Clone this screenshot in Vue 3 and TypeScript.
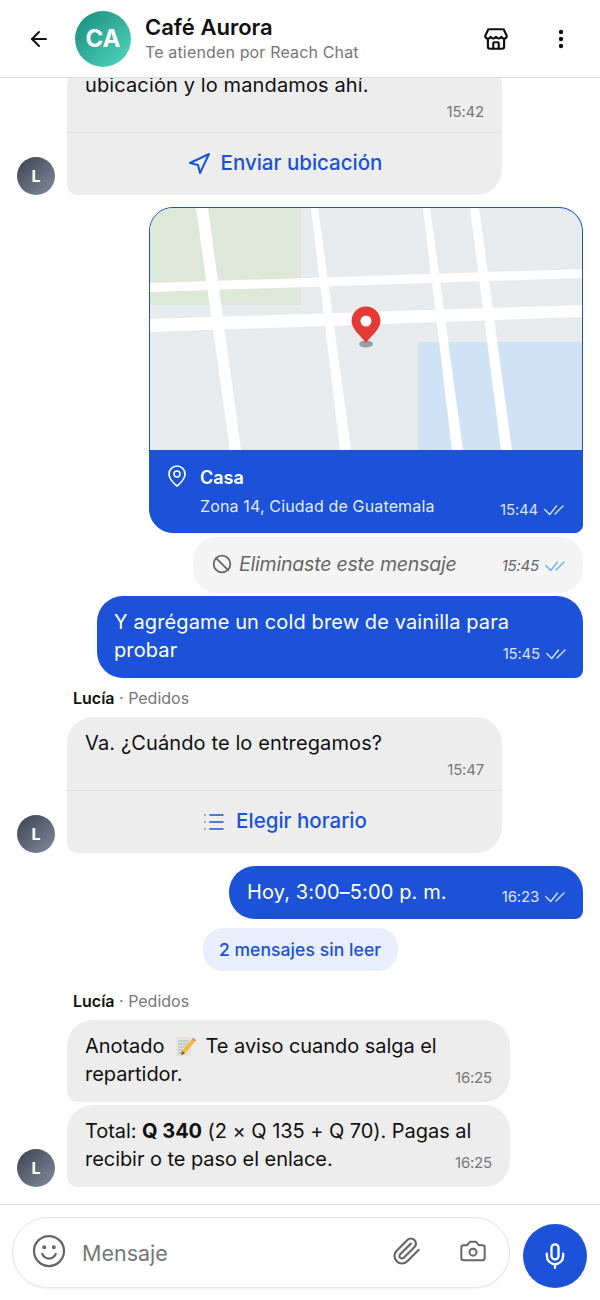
<template>
  <div class="screen">
    <header class="topbar">
      <button class="icon-btn back" aria-label="Volver">
        <svg width="24" height="24" viewBox="0 0 24 24" fill="none" stroke="#111" stroke-width="2" stroke-linecap="round" stroke-linejoin="round"><path d="M19 12H5" /><path d="m12 19-7-7 7-7" /></svg>
      </button>
      <div class="shop-avatar">CA</div>
      <div class="shop-info">
        <div class="shop-name">Café Aurora</div>
        <div class="shop-sub">Te atienden por Reach Chat</div>
      </div>
      <button class="icon-btn store" aria-label="Tienda">
        <svg width="26" height="26" viewBox="0 0 24 24" fill="none" stroke="#111" stroke-width="2" stroke-linecap="round" stroke-linejoin="round">
          <path d="M5 3h14l3 6.2a2.6 2.6 0 0 1-5 .8 2.8 2.8 0 0 1-5 0 2.8 2.8 0 0 1-5 0 2.6 2.6 0 0 1-5-.8z" />
          <path d="M4.5 12v7a2 2 0 0 0 2 2h11a2 2 0 0 0 2-2v-7" />
          <path d="M9.5 21v-5a1 1 0 0 1 1-1h3a1 1 0 0 1 1 1v5" />
        </svg>
      </button>
      <button class="icon-btn dots" aria-label="Más">
        <svg width="24" height="24" viewBox="0 0 24 24" fill="#111"><circle cx="12" cy="5" r="2.2" /><circle cx="12" cy="12" r="2.2" /><circle cx="12" cy="19" r="2.2" /></svg>
      </button>
    </header>

    <main class="messages">
      <div class="row in">
        <div class="avatar">L</div>
        <div class="bubble incoming card">
          <p class="text">ubicación y lo mandamos ahí.</p>
          <div class="card-time">15:42</div>
          <div class="action">
            <svg width="24" height="24" viewBox="0 0 24 24" fill="none" stroke="currentColor" stroke-width="2" stroke-linecap="round" stroke-linejoin="round"><polygon points="3 11 22 2 13 21 11 13 3 11" /></svg>
            <span>Enviar ubicación</span>
          </div>
        </div>
      </div>

      <div class="row out map-row">
        <div class="map-bubble">
          <svg class="map" width="432" height="242" viewBox="150 208 432 242">
            <rect x="150" y="208" width="432" height="242" fill="#e8ebee" />
            <rect x="150" y="208" width="151" height="97" fill="#dde8d9" />
            <rect x="418" y="342" width="164" height="108" fill="#d0e2f6" />
            <g fill="#fff">
              <polygon points="150,283 582,269 582,278 150,292" />
              <polygon points="150,319 582,305 582,317 150,332" />
              <polygon points="196,208 208,208 241,450 230,450" />
              <polygon points="311,208 318,208 351,450 340,450" />
              <polygon points="423,208 430,208 463,450 452,450" />
              <polygon points="470,208 479,208 512,450 501,450" />
            </g>
            <ellipse cx="366" cy="344" rx="7" ry="3.5" fill="#9a9da1" />
            <path d="M366 343c-5-7-14.500-14-14.500-22a14.500 14.500 0 0 1 29 0c0 8-9.500 15-14.500 22z" fill="#e53935" />
            <circle cx="366" cy="321" r="5.500" fill="#fff" />
          </svg>
          <div class="map-info">
            <svg class="map-pin" width="24" height="24" viewBox="0 0 24 24" fill="none" stroke="currentColor" stroke-width="1.600" stroke-linecap="round" stroke-linejoin="round"><path d="M20 10c0 6-8 12-8 12s-8-6-8-12a8 8 0 0 1 16 0Z" /><circle cx="12" cy="10" r="3" /></svg>
            <div class="map-text">
              <div class="map-title">Casa</div>
              <div class="map-foot">
                <span class="map-addr">Zona 14, Ciudad de Guatemala</span>
                <span class="meta light">15:44 <svg class="ticks" width="20" height="12" viewBox="0 0 20 12" fill="none" stroke="currentColor" stroke-width="1.300" stroke-linecap="round" stroke-linejoin="round"><path d="M.7 5.500 5.700 10.500 12.500 2" /><path d="M11 10 19 2" /></svg></span>
              </div>
            </div>
          </div>
        </div>
      </div>

      <div class="row out after-map">
        <div class="bubble deleted">
          <svg class="ban" width="20" height="20" viewBox="0 0 24 24" fill="none" stroke="#666" stroke-width="2.200" stroke-linecap="round"><circle cx="12" cy="12" r="10" /><path d="m4.900 4.900 14.200 14.200" /></svg>
          <em class="deleted-text">Eliminaste este mensaje</em>
          <span class="meta seen">15:45 <svg class="ticks" width="20" height="12" viewBox="0 0 20 12" fill="none" stroke="currentColor" stroke-width="1.300" stroke-linecap="round" stroke-linejoin="round"><path d="M.7 5.500 5.700 10.500 12.500 2" /><path d="M11 10 19 2" /></svg></span>
        </div>
      </div>

      <div class="row out tight">
        <div class="bubble outgoing wide">
          <p class="text">Y agrégame un cold brew de vainilla para<br />probar<span class="meta light float">15:45 <svg class="ticks" width="20" height="12" viewBox="0 0 20 12" fill="none" stroke="currentColor" stroke-width="1.300" stroke-linecap="round" stroke-linejoin="round"><path d="M.7 5.500 5.700 10.500 12.500 2" /><path d="M11 10 19 2" /></svg></span></p>
        </div>
      </div>

      <div class="sender"><b>Lucía</b> · Pedidos</div>
      <div class="row in">
        <div class="avatar">L</div>
        <div class="bubble incoming card">
          <p class="text">Va. ¿Cuándo te lo entregamos?</p>
          <div class="card-time">15:47</div>
          <div class="action">
            <svg width="24" height="24" viewBox="0 0 24 24" fill="none" stroke="currentColor" stroke-width="1.600" stroke-linecap="round"><path d="M8 5h13M8 12h13M8 19h13M3 5h.01M3 12h.01M3 19h.01" /></svg>
            <span>Elegir horario</span>
          </div>
        </div>
      </div>

      <div class="row out after-card">
        <div class="bubble outgoing hoy">
          <p class="text">Hoy, 3:00–5:00 p. m.</p>
          <span class="meta light">16:23 <svg class="ticks" width="20" height="12" viewBox="0 0 20 12" fill="none" stroke="currentColor" stroke-width="1.300" stroke-linecap="round" stroke-linejoin="round"><path d="M.7 5.500 5.700 10.500 12.500 2" /><path d="M11 10 19 2" /></svg></span>
        </div>
      </div>

      <div class="unread">2 mensajes sin leer</div>

      <div class="sender"><b>Lucía</b> · Pedidos</div>
      <div class="row in">
        <div class="avatar ghost"></div>
        <div class="bubble incoming long">
          <p class="text">Anotado <svg class="memo" width="24" height="24" viewBox="0 0 24 24"><rect x="3" y="3" width="15" height="19" fill="#e4e4dc" /><path d="M5 7h11M5 10h11M5 13h9M5 16h6M5 19h5" stroke="#a9b4bf" stroke-width="1" /><path d="m9 17 10-12 3 2.500-10 12-4 1.500z" fill="#f4b942" /><path d="m19 5 1-1.200 3 2.500-1 1.200z" fill="#e07a5f" /><path d="m8 21 .9-4 3 2.500z" fill="#6b5a44" /></svg> Te aviso cuando salga el<br />repartidor.<span class="meta float">16:25</span></p>
        </div>
      </div>
      <div class="row in tight">
        <div class="avatar">L</div>
        <div class="bubble incoming long">
          <p class="text">Total: <b>Q 340</b> (2 × Q 135 + Q 70). Pagas al<br />recibir o te paso el enlace.<span class="meta float">16:25</span></p>
        </div>
      </div>
    </main>

    <footer class="composer">
      <div class="input">
        <svg class="smile" width="36" height="36" viewBox="0 0 24 24" fill="none" stroke="#666" stroke-width="1.500" stroke-linecap="round"><circle cx="12" cy="12" r="10" /><path d="M7.500 14s1.500 3 4.500 3 4.500-3 4.500-3" /><circle cx="8.800" cy="9.500" r=".6" fill="#666" /><circle cx="15.200" cy="9.500" r=".6" fill="#666" /></svg>
        <span class="placeholder">Mensaje</span>
        <svg class="clip" width="30" height="30" viewBox="0 0 24 24" fill="none" stroke="#666" stroke-width="1.700" stroke-linecap="round" stroke-linejoin="round"><path d="m21.440 11.050-9.190 9.190a6 6 0 0 1-8.490-8.490l8.570-8.570A4 4 0 1 1 18 8.840l-8.590 8.570a2 2 0 0 1-2.830-2.830l8.490-8.480" /></svg>
        <svg class="cam" width="28" height="28" viewBox="0 0 24 24" fill="none" stroke="#666" stroke-width="1.700" stroke-linecap="round" stroke-linejoin="round"><path d="M14.500 4h-5L7 7H4a2 2 0 0 0-2 2v9a2 2 0 0 0 2 2h16a2 2 0 0 0 2-2V9a2 2 0 0 0-2-2h-3z" /><circle cx="12" cy="13" r="3" /></svg>
      </div>
      <button class="mic" aria-label="Grabar">
        <svg width="28" height="28" viewBox="0 0 24 24" fill="none" stroke="#fff" stroke-width="2" stroke-linecap="round" stroke-linejoin="round"><path d="M12 2a3 3 0 0 0-3 3v7a3 3 0 0 0 6 0V5a3 3 0 0 0-3-3Z" /><path d="M19 10v2a7 7 0 0 1-14 0v-2" /><path d="M12 19v3" /></svg>
      </button>
    </footer>
  </div>
</template>

<script setup lang="ts">
</script>

<style scoped>
.screen {
  width: 600px;
  height: 1300px;
  display: flex;
  flex-direction: column;
  background: #fff;
  color: #111;
  font-family: Inter, "Liberation Sans", sans-serif;
  overflow: hidden;
}

.topbar {
  flex: 0 0 78px;
  box-sizing: border-box;
  display: flex;
  align-items: center;
  border-bottom: 1px solid #dedede;
  padding: 0 27px 0 27px;
  background: #fff;
}

.icon-btn {
  border: 0;
  background: none;
  padding: 0;
  display: flex;
}

.shop-avatar {
  width: 56px;
  height: 56px;
  margin-left: 24px;
  border-radius: 50%;
  background: linear-gradient(135deg, #178a7d, #52d9be);
  color: #fff;
  display: flex;
  align-items: center;
  justify-content: center;
  font-size: 24px;
  font-weight: 700;
}

.shop-info {
  flex: 1;
  margin-left: 14px;
  margin-top: -3px;
}

.shop-name {
  font-size: 22px;
  font-weight: 600;
  line-height: 29px;
}

.shop-sub {
  font-size: 16px;
  line-height: 20px;
  letter-spacing: 0.15px;
  color: #777;
}

.store {
  margin-right: 40px;
}

.messages {
  flex: 1;
  min-height: 0;
  display: flex;
  flex-direction: column;
  justify-content: flex-end;
  overflow: hidden;
  padding: 0 17px 17px;
}

.row {
  display: flex;
  align-items: flex-end;
  flex-shrink: 0;
}

.row.out {
  justify-content: flex-end;
}

.row.tight {
  margin-top: 3px;
}

.map-row {
  margin-top: 12px;
}

.after-map {
  margin-top: 4px;
}

.after-card {
  margin-top: 13px;
}

.avatar {
  flex: 0 0 38px;
  height: 38px;
  margin-right: 12px;
  border-radius: 50%;
  background: linear-gradient(135deg, #3b4350, #828c9c);
  color: #fff;
  font-size: 16px;
  font-weight: 700;
  display: flex;
  align-items: center;
  justify-content: center;
}

.avatar.ghost {
  background: none;
}

.bubble {
  box-sizing: border-box;
  border-radius: 26px;
  font-size: 20px;
}

.text {
  margin: 0;
  font-size: 20px;
  line-height: 28px;
  letter-spacing: 0.12px;
}

.incoming {
  background: #ededed;
  border-bottom-left-radius: 10px;
}

.incoming.card {
  width: 435px;
}

.incoming.long {
  width: 443px;
  padding: 12px 18px 14px;
}

.incoming.long .text {
  letter-spacing: -0.05px;
}

.card .text {
  padding: 12px 18px 0;
}

.card-time {
  margin-top: 1px;
  padding: 0 18px;
  height: 24px;
  line-height: 24px;
  font-size: 15px;
  letter-spacing: -0.2px;
  color: #777;
  text-align: right;
}

.action {
  margin-top: 8px;
  height: 63px;
  box-sizing: border-box;
  border-top: 1px solid #e0e0e0;
  display: flex;
  align-items: center;
  justify-content: center;
  gap: 10px;
  color: #1b52d8;
  font-size: 20.500px;
  font-weight: 500;
}

.action span {
  margin-top: -3px;
}

.outgoing {
  background: #1b52d8;
  color: #fff;
  border-bottom-right-radius: 8px;
}

.outgoing.wide {
  width: 486px;
  padding: 12px 17px 14px;
}

.outgoing.hoy {
  display: flex;
  align-items: center;
  justify-content: space-between;
  width: 354px;
  height: 53px;
  padding: 0 18px;
}

.outgoing.hoy .text {
  margin-top: -2px;
}

.outgoing.hoy .meta {
  margin-top: 8px;
}

.meta {
  display: inline-flex;
  align-items: center;
  gap: 6px;
  font-size: 15px;
  line-height: 20px;
  letter-spacing: -0.2px;
  color: #777;
  white-space: nowrap;
}

.meta.light {
  color: rgba(255, 255, 255, 0.85);
}

.meta.seen {
  color: #666;
  font-style: italic;
  margin-top: 4px;
}

.meta.seen .ticks {
  color: #5db5f0;
}

.meta.float {
  float: right;
  margin-top: 8px;
}

.map-bubble {
  width: 434px;
  box-sizing: border-box;
  border: 1px solid #1b52d8;
  border-radius: 24px;
  border-bottom-right-radius: 8px;
  overflow: hidden;
  background: #1b52d8;
  flex-shrink: 0;
}

.map {
  display: block;
}

.map-info {
  display: flex;
  align-items: flex-start;
  height: 82px;
  box-sizing: border-box;
  color: #fff;
  padding: 15px 18px 0 15px;
}

.map-pin {
  flex: none;
  margin-top: -1px;
  margin-right: 11px;
}

.map-text {
  flex: 1;
}

.map-title {
  font-size: 18px;
  font-weight: 600;
  line-height: 26px;
}

.map-foot {
  display: flex;
  align-items: center;
  justify-content: space-between;
  margin-top: 1px;
  font-size: 16px;
  letter-spacing: 0.15px;
}

.map-foot .meta {
  margin-top: 8px;
}

.map-addr {
  color: rgba(255, 255, 255, 0.9);
}

.bubble.deleted {
  width: 390px;
  height: 56px;
  display: flex;
  align-items: center;
  padding: 0 18px 2px 19px;
  background: #f4f4f4;
  border-radius: 24px;
  flex-shrink: 0;
}

.ban {
  flex: none;
  margin-right: 7px;
}

.deleted-text {
  flex: 1;
  color: #666;
  font-size: 19.500px;
  letter-spacing: -0.2px;
}

.sender {
  margin: 10px 0 9px 56px;
  font-size: 16px;
  line-height: 20px;
  color: #777;
  flex-shrink: 0;
}

.sender b {
  color: #111;
  font-weight: 600;
}

.unread {
  align-self: center;
  flex-shrink: 0;
  margin: 9px 0 10px;
  height: 43px;
  width: 195px;
  box-sizing: border-box;
  text-align: center;
  border-radius: 20px;
  background: #e8eefb;
  color: #1b52d8;
  font-size: 17.500px;
  font-weight: 500;
  letter-spacing: 0.08px;
  line-height: 43px;
}

.memo {
  vertical-align: -5px;
  margin: 0 3px;
}

.composer {
  flex: 0 0 96px;
  box-sizing: border-box;
  display: flex;
  align-items: flex-start;
  border-top: 1px solid #dedede;
  padding: 12px 13px 0 12px;
  gap: 13px;
}

.input {
  flex: 1;
  height: 71px;
  box-sizing: border-box;
  border: 1.500px solid #e4e4e4;
  border-radius: 36px;
  display: flex;
  align-items: center;
  padding: 0 22px 0 18px;
  box-shadow: 0 1px 2px rgba(0, 0, 0, 0.06);
}

.smile {
  flex: none;
  margin-top: -3px;
}

.placeholder {
  flex: 1;
  margin-left: 15px;
  font-size: 21.500px;
  color: #777;
}

.clip {
  margin-top: -3px;
  margin-right: 37px;
}

.cam {
  margin-top: -3px;
}

.mic {
  flex: 0 0 64px;
  height: 64px;
  margin-top: 7px;
  border: 0;
  padding: 0;
  border-radius: 50%;
  background: #1b52d8;
  display: flex;
  align-items: center;
  justify-content: center;
}
</style>
